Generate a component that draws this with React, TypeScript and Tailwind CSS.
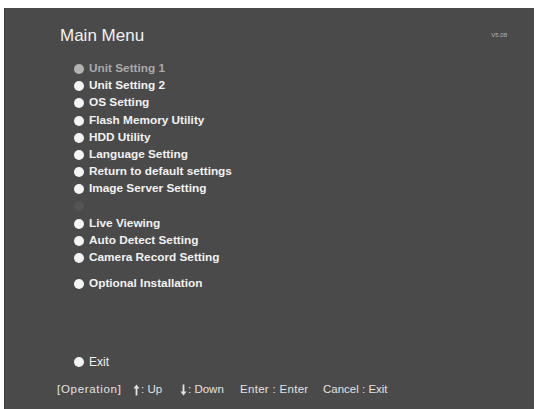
import type { ReactNode } from "react";

type MenuItem = {
  label: string;
  state?: "dim" | "hidden";
};

const upperItems: MenuItem[] = [
  { label: "Unit Setting 1", state: "dim" },
  { label: "Unit Setting 2" },
  { label: "OS Setting" },
  { label: "Flash Memory Utility" },
  { label: "HDD Utility" },
  { label: "Language Setting" },
  { label: "Return to default settings" },
  { label: "Image Server Setting" },
  { label: "", state: "hidden" },
  { label: "Live Viewing" },
  { label: "Auto Detect Setting" },
  { label: "Camera Record Setting" },
];

function Bullet({ tone = "on" }: { tone?: "on" | "dim" | "hidden" }) {
  const color =
    tone === "dim" ? "bg-[#b4b4b4]" : tone === "hidden" ? "bg-[#545454]" : "bg-[#f4f4f4]";
  return <span className={`h-[10px] w-[10px] shrink-0 rounded-full ${color}`} />;
}

function Row({ item }: { item: MenuItem }) {
  const textColor = item.state === "dim" ? "text-[#a9a9a9]" : "text-[#f2f2f2]";
  return (
    <div className="flex h-[17.2px] items-center gap-[5px]">
      <Bullet tone={item.state ?? "on"} />
      <span className={`text-[11.8px] font-bold leading-none ${textColor}`}>{item.label}</span>
    </div>
  );
}

function Key({ children, className = "" }: { children: ReactNode; className?: string }) {
  return <span className={`shrink-0 whitespace-pre ${className}`}>{children}</span>;
}

// tall up/down arrow used in the key guide
function Arrow({ down = false }: { down?: boolean }) {
  return (
    <svg width="7" height="12" viewBox="0 0 7 12" className={down ? "rotate-180" : ""}>
      <path d="M3.5 0.5 L6.5 4.5 L4.4 4.5 L4.4 11.5 L2.6 11.5 L2.6 4.5 L0.5 4.5 Z" fill="#e2e2e2" />
    </svg>
  );
}

export default function App() {
  return (
    <div className="h-[409px] w-[540px] overflow-hidden bg-white pl-[4px] pt-[8px] font-['Liberation_Sans',Arial,sans-serif]">
      <div className="flex h-[401px] w-[530px] flex-col border-l border-[#3c3c3c] bg-[#4a4a4a] pl-[55px] pr-[27px] pt-[17px]">
        <div className="flex h-[20px] items-center justify-between">
          <h1 className="text-[17px] leading-none text-[#f2f2f2]">Main Menu</h1>
          <span className="text-[6px] leading-none text-[#b8b8b8]">V5.08</span>
        </div>

        <div className="mt-[15.4px] flex flex-col pl-[14px]">
          {upperItems.map((item, i) => (
            <Row key={i} item={item} />
          ))}
          <div className="mt-[8.8px]">
            <Row item={{ label: "Optional Installation" }} />
          </div>
        </div>

        <div className="mt-[61px] flex h-[17px] items-center gap-[5px] pl-[14px]">
          <Bullet />
          <span className="text-[12px] leading-none text-[#efefef]">Exit</span>
        </div>

        {/* key guide, columns follow the on-screen spacing */}
        <div className="-ml-[3px] mt-[11px] flex h-[17px] items-center text-[11.5px] leading-none text-[#e2e2e2]">
          <Key className="w-[76px] tracking-[0.7px]">[Operation]</Key>
          <Key className="flex w-[8px] items-center">
            <Arrow />
          </Key>
          <Key className="w-[39px]">: Up</Key>
          <Key className="flex w-[8px] items-center">
            <Arrow down />
          </Key>
          <Key className="w-[52px]">: Down</Key>
          <Key className="w-[83px] tracking-[0.3px]">Enter : Enter</Key>
          <Key>Cancel : Exit</Key>
        </div>
      </div>
    </div>
  );
}
